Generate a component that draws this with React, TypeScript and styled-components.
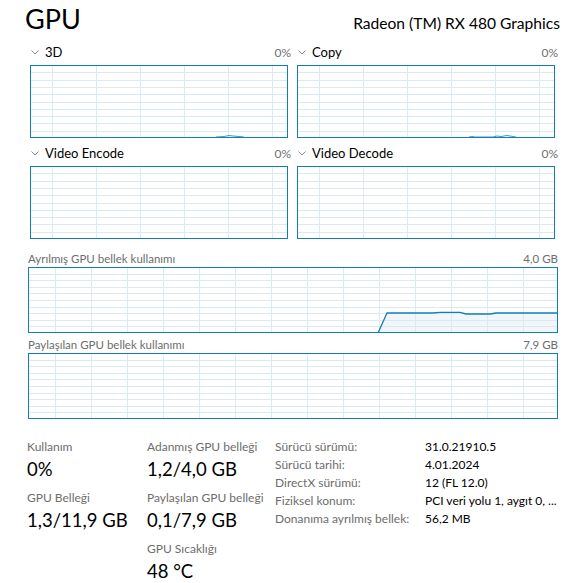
import React from 'react';
import styled, { createGlobalStyle } from 'styled-components';

const BORDER = '#117dbb';
const GRID = '#d9eaf4';
const FILL = '#f1f6fa';

const GlobalStyle = createGlobalStyle`
  html, body {
    margin: 0;
    padding: 0;
    background: #ffffff;
  }
  body {
    font-family: Lato, "Noto Sans", sans-serif;
    color: #000000;
  }
`;

const Page = styled.div`
  width: 585px;
  height: 583px;
  box-sizing: border-box;
  padding: 0 25px;
  overflow: hidden;
`;

const Header = styled.div`
  display: flex;
  justify-content: space-between;
  align-items: baseline;
  height: 45px;
`;

const Title = styled.h1`
  margin: 0;
  font-size: 27px;
  font-weight: 400;
  line-height: 38px;
`;

const DeviceName = styled.div`
  font-size: 15.6px;
`;

const EngineGrid = styled.div`
  display: grid;
  grid-template-columns: 261px 261px;
  column-gap: 6px;
  row-gap: 8px;
  margin-left: 5px;
`;

const Engine = styled.div`
  display: flex;
  flex-direction: column;
`;

const EngineHead = styled.div`
  display: flex;
  align-items: center;
  height: 20px;
  box-sizing: border-box;
  padding-bottom: 6px;
`;

const EngineName = styled.span`
  font-size: 13px;
  margin-left: 6px;
  flex: 1;
`;

const Percent = styled.span`
  font-size: 12px;
  color: #707070;
`;

const MemorySection = styled.div`
  display: flex;
  flex-direction: column;
  margin: 10px 0 0 3px;
  width: 530px;
`;

const MemoryHead = styled.div<{ $first?: boolean }>`
  display: flex;
  justify-content: space-between;
  align-items: center;
  height: 18px;
  margin-top: ${(p) => (p.$first ? '0' : '2px')};
  font-size: 11.5px;
  color: #6d6d6d;
`;

const Stats = styled.div`
  display: flex;
  margin: 19px 0 0 2px;
`;

const StatColumn = styled.div<{ $width: number }>`
  display: flex;
  flex-direction: column;
  width: ${(p) => p.$width}px;
`;

const Stat = styled.div`
  display: flex;
  flex-direction: column;
  margin-bottom: 6px;
`;

const StatLabel = styled.span`
  font-size: 12px;
  line-height: 18px;
  color: #6d6d6d;
  white-space: nowrap;
`;

const StatValue = styled.span`
  font-size: 18.5px;
  line-height: 27px;
  white-space: nowrap;
`;

const Details = styled.div`
  display: grid;
  grid-template-columns: 150px auto;
  grid-auto-rows: 18px;
  align-items: center;
  margin-top: -1px;
  font-size: 12px;
  white-space: nowrap;
`;

const DetailKey = styled.span`
  color: #6d6d6d;
`;

const DetailValue = styled.span`
  color: #000000;
`;

const Chevron = () => (
  <svg width="8" height="5" viewBox="0 0 8 5" style={{ marginLeft: 1 }}>
    <polyline points="0.5,0.5 4,4 7.5,0.5" fill="none" stroke="#8a8a8a" strokeWidth="1" />
  </svg>
);

type ChartProps = {
  width: number;
  height: number;
  offset: number;
  step: number;
  line?: [number, number][];
  filled?: boolean;
};

const Chart: React.FC<ChartProps> = ({ width, height, offset, step, line, filled }) => {
  const rows: number[] = [];
  for (let i = 1; i < 10; i++) rows.push(Math.round((height * i) / 10) + 0.5);
  const cols: number[] = [];
  for (let x = offset; x < width - 1; x += step) cols.push(Math.round(x) + 0.5);
  const pts = line ? line.map(([x, y]) => `${x},${y}`).join(' ') : '';
  return (
    <svg width={width} height={height} style={{ display: 'block' }}>
      {filled && line && (
        <polygon points={`${line[0][0]},${height} ${pts} ${line[line.length - 1][0]},${height}`} fill={FILL} />
      )}
      {rows.map((y) => (
        <line key={'r' + y} x1={0} x2={width} y1={y} y2={y} stroke={GRID} strokeWidth="1" />
      ))}
      {cols.map((x) => (
        <line key={'c' + x} x1={x} x2={x} y1={0} y2={height} stroke={GRID} strokeWidth="1" />
      ))}
      {line && <polyline points={pts} fill="none" stroke={BORDER} strokeWidth={filled ? 1.3 : 1} opacity={filled ? 1 : 0.8} />}
      <rect x={0.5} y={0.5} width={width - 1} height={height - 1} fill="none" stroke={BORDER} strokeWidth="1" />
    </svg>
  );
};

const engines = [
  { name: '3D', line: [[186, 72], [194, 71.5], [199, 70.5], [203, 71], [209, 71.5], [214, 72]] as [number, number][] },
  { name: 'Copy', line: [[172, 72], [175, 71.5], [178, 72], [196, 72], [200, 71], [204, 71.5], [210, 70.5], [216, 71.5], [219, 72]] as [number, number][] },
  { name: 'Video Encode' },
  { name: 'Video Decode' },
];

const dedicatedLine: [number, number][] = [
  [350, 66], [359, 46], [405, 46], [412, 45.3], [432, 45.3], [438, 47], [462, 47], [468, 46], [529, 46],
];

const details = [
  ['Sürücü sürümü:', '31.0.21910.5'],
  ['Sürücü tarihi:', '4.01.2024'],
  ['DirectX sürümü:', '12 (FL 12.0)'],
  ['Fiziksel konum:', 'PCI veri yolu 1, aygıt 0, ...'],
  ['Donanıma ayrılmış bellek:', '56,2 MB'],
];

export default function App() {
  return (
    <>
      <GlobalStyle />
      <Page>
        <Header>
          <Title>GPU</Title>
          <DeviceName>Radeon (TM) RX 480 Graphics</DeviceName>
        </Header>

        <EngineGrid>
          {engines.map((e) => (
            <Engine key={e.name}>
              <EngineHead>
                <Chevron />
                <EngineName>{e.name}</EngineName>
                <Percent>0%</Percent>
              </EngineHead>
              <Chart width={258} height={73} offset={22} step={44} line={e.line} />
            </Engine>
          ))}
        </EngineGrid>

        <MemorySection>
          <MemoryHead $first>
            <span>Ayrılmış GPU bellek kullanımı</span>
            <span>4,0 GB</span>
          </MemoryHead>
          <Chart width={530} height={66} offset={27} step={36} line={dedicatedLine} filled />
          <MemoryHead>
            <span>Paylaşılan GPU bellek kullanımı</span>
            <span>7,9 GB</span>
          </MemoryHead>
          <Chart width={530} height={66} offset={27} step={36} />
        </MemorySection>

        <Stats>
          <StatColumn $width={120}>
            <Stat>
              <StatLabel>Kullanım</StatLabel>
              <StatValue>0%</StatValue>
            </Stat>
            <Stat>
              <StatLabel>GPU Belleği</StatLabel>
              <StatValue>1,3/11,9 GB</StatValue>
            </Stat>
          </StatColumn>
          <StatColumn $width={128}>
            <Stat>
              <StatLabel>Adanmış GPU belleği</StatLabel>
              <StatValue>1,2/4,0 GB</StatValue>
            </Stat>
            <Stat>
              <StatLabel>Paylaşılan GPU belleği</StatLabel>
              <StatValue>0,1/7,9 GB</StatValue>
            </Stat>
            <Stat>
              <StatLabel>GPU Sıcaklığı</StatLabel>
              <StatValue>48 °C</StatValue>
            </Stat>
          </StatColumn>
          <Details>
            {details.map(([k, v]) => (
              <React.Fragment key={k}>
                <DetailKey>{k}</DetailKey>
                <DetailValue>{v}</DetailValue>
              </React.Fragment>
            ))}
          </Details>
        </Stats>
      </Page>
    </>
  );
}
